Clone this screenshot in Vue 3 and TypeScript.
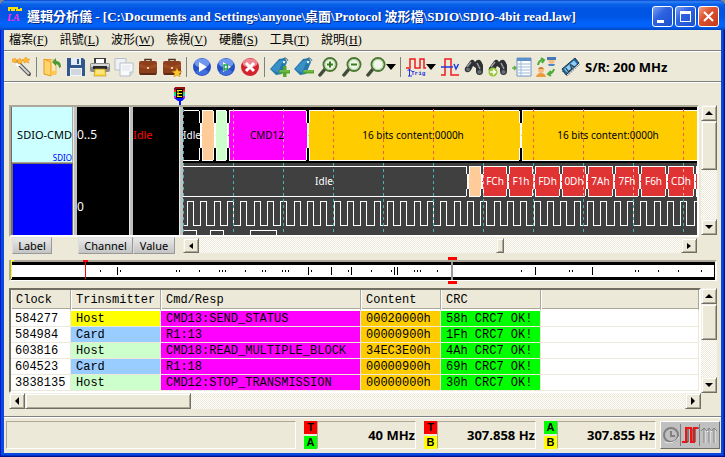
<script setup lang="ts">
interface Segment {
  from: number
  to: number
  kind: 'idle' | 'peach' | 'mint' | 'magenta' | 'amber' | 'red'
}

interface Tool {
  id: string
  label: string
  menu?: boolean
}

const menus = [
  { text: '檔案', key: 'F' },
  { text: '訊號', key: 'L' },
  { text: '波形', key: 'W' },
  { text: '檢視', key: 'V' },
  { text: '硬體', key: 'S' },
  { text: '工具', key: 'T' },
  { text: '說明', key: 'H' },
]

const toolGroups: Tool[][] = [
  [{ id: 'wand', label: 'Wizard' }],
  [
    { id: 'open', label: 'Open' },
    { id: 'save', label: 'Save' },
    { id: 'print', label: 'Print' },
    { id: 'copy', label: 'Copy' },
    { id: 'case', label: 'Settings' },
    { id: 'casestar', label: 'Default settings' },
  ],
  [
    { id: 'play', label: 'Run' },
    { id: 'repeat', label: 'Repeat run' },
    { id: 'stop', label: 'Stop' },
  ],
  [
    { id: 'tagadd', label: 'Add label' },
    { id: 'tagdel', label: 'Remove label' },
    { id: 'zoomin', label: 'Zoom in' },
    { id: 'zoomout', label: 'Zoom out' },
    { id: 'zoom', label: 'Zoom', menu: true },
  ],
  [
    { id: 'trig', label: 'Trigger', menu: true },
    { id: 'volt', label: 'Threshold' },
    { id: 'find', label: 'Find' },
    { id: 'findnext', label: 'Find next' },
    { id: 'list', label: 'Report' },
    { id: 'users', label: 'Swap' },
    { id: 'chip', label: 'Analyzer' },
  ],
]

/* Bus segments, in pixels from the left edge of the plot */
const commandLane: Segment[] = [
  { from: -4, to: 18, kind: 'idle' },
  { from: 18, to: 32, kind: 'peach' },
  { from: 32, to: 45, kind: 'mint' },
  { from: 45, to: 125, kind: 'magenta' },
  { from: 125, to: 338, kind: 'amber' },
  { from: 338, to: 518, kind: 'amber' },
]

const byteEdges = [299, 325, 351, 378, 404, 431, 457, 484, 512]
const bytes = ['FCh', 'F1h', 'FDh', '0Dh', '7Ah', '7Fh', 'F6h', 'CDh']
const dataLane: Segment[] = [
  { from: -3, to: 285, kind: 'idle' },
  { from: 285, to: 299, kind: 'peach' },
  ...bytes.map((_, i): Segment => ({
    from: byteEdges[i],
    to: byteEdges[i + 1],
    kind: 'red',
  })),
  { from: 512, to: 540, kind: 'red' },
]

function hexagon(s: Segment, top: number, bottom: number): string {
  const mid = (top + bottom) / 2
  const inset = 2
  return [
    [s.from, mid],
    [s.from + inset, top],
    [s.to - inset, top],
    [s.to, mid],
    [s.to - inset, bottom],
    [s.from + inset, bottom],
  ].map((p) => p.join(',')).join(' ')
}

function clockPath(): string {
  let d = 'M0 118'
  for (let k = 0; k < 60; k++) {
    const rise = Math.round(4 + (k * 40) / 3)
    d += `H${rise}V94H${rise + 6}V118`
  }
  return d
}

const clock = clockPath()
const gridLines = Array.from({ length: 24 }, (_, i) => i * 50)

/* Overview marks, in pixels from the left end of the strip */
const dots = [
  89, 109, 165, 168, 188, 208, 211, 214, 234, 251, 254, 271, 274, 277, 300, 337,
  360, 380, 403, 406, 409, 426, 510, 558, 561, 624, 627, 647, 667, 690,
]
const bars = [106, 297, 320, 340, 383, 386, 524, 581]

const rows = [
  { clock: '584277', who: 'Host', tone: 'yellow', cmd: 'CMD13:SEND_STATUS', content: '00020000h', crc: '58h CRC7 OK!' },
  { clock: '584984', who: 'Card', tone: 'blue', cmd: 'R1:13', content: '00000900h', crc: '1Fh CRC7 OK!' },
  { clock: '603816', who: 'Host', tone: 'mint', cmd: 'CMD18:READ_MULTIPLE_BLOCK', content: '34EC3E00h', crc: '4Ah CRC7 OK!' },
  { clock: '604523', who: 'Card', tone: 'blue', cmd: 'R1:18', content: '00000900h', crc: '69h CRC7 OK!' },
  { clock: '3838135', who: 'Host', tone: 'mint', cmd: 'CMD12:STOP_TRANSMISSION', content: '00000000h', crc: '30h CRC7 OK!' },
]

const meters = [
  { a: 'T', b: 'A', value: '40 MHz' },
  { a: 'T', b: 'B', value: '307.858 Hz' },
  { a: 'A', b: 'B', value: '307.855 Hz' },
]
</script>

<template>
  <div class="window">
    <header class="titlebar">
      <svg class="app-icon" width="16" height="18" viewBox="0 0 16 18">
        <path d="M2 5V2H5V4H7V2H10V4H14V2" fill="none" stroke="#ffe000" stroke-width="2" />
        <text x="0" y="15" class="app-icon-text">LA</text>
      </svg>
      <h1>邏輯分析儀 - [C:\Documents and Settings\anyone\桌面\Protocol 波形檔\SDIO\SDIO-4bit read.law]</h1>
      <div class="caption-buttons">
        <button type="button" class="cap" aria-label="Minimize">
          <svg width="19" height="19" viewBox="0 0 19 19"><path d="M4 13H11V16H4Z" fill="#fff" /></svg>
        </button>
        <button type="button" class="cap" aria-label="Maximize">
          <svg width="19" height="19" viewBox="0 0 19 19"><path d="M4 4H15V15H4ZM5 7V14H14V7Z" fill="#fff" fill-rule="evenodd" /></svg>
        </button>
        <button type="button" class="cap close" aria-label="Close">
          <svg width="19" height="19" viewBox="0 0 19 19"><path d="M5 5L14 14M14 5L5 14" stroke="#fff" stroke-width="2" /></svg>
        </button>
      </div>
    </header>

    <div class="content">
      <nav class="menubar">
        <button v-for="m in menus" :key="m.key" type="button">{{ m.text }}(<u>{{ m.key }}</u>)</button>
      </nav>

      <div class="toolbar">
        <div v-for="(group, gi) in toolGroups" :key="gi" class="tool-group">
          <button v-for="t in group" :key="t.id" type="button" class="tool" :aria-label="t.label">
            <svg width="20" height="20" viewBox="0 0 20 20">
              <g v-if="t.id === 'wand'">
                <path d="M6 6L17 17" stroke="#555" stroke-width="4" stroke-linecap="round" />
                <path d="M6 6L17 17" stroke="#d3d5d8" stroke-width="2" />
                <path d="M4 6L7 9" stroke="#fff" stroke-width="3" />
                <path d="M8 1l1 2 2 0-1.500 2 .5 2-2-1-2 1 0-2-2-2 2 0zM14 0l1 2 3 0-2 2 1 2-3-1-2 1 0-2-2-1 2-1zM3 1l1 2 2 0-2 1 0 2-2-1-2 0 1-2-1-1 2 0z" fill="#ffb930" stroke="#e88a10" stroke-width=".5" />
              </g>
              <g v-else-if="t.id === 'open'">
                <path d="M2 2H9L11 4H13V17L2 18Z" fill="#f2a51c" />
                <path d="M5 3H14V17H5Z" fill="#fbe9b8" stroke="#e9a83a" stroke-width=".8" />
                <path d="M2 2L9 5V19L2 17Z" fill="#ffd569" stroke="#e99a16" />
                <path d="M12 11C12 8 14 7 15 7V9L19 5L15 1V4C12 4 10 6 10 10Z" fill="#4c9a35" transform="matrix(-1 0 0 1 29 0)" />
                <path d="M9 14H14V18H9Z" fill="#ffc84c" />
              </g>
              <g v-else-if="t.id === 'save'">
                <path d="M1 1H17L19 3V19H1Z" fill="#31588e" />
                <path d="M5 1H15V8H5Z" fill="#e4edf7" />
                <path d="M11 2H13V7H11Z" fill="#31588e" />
                <path d="M4 11H16V19H4Z" fill="#f4f7fa" />
                <path d="M5 13H15M5 15H15M5 17H15" stroke="#aab7c8" />
              </g>
              <g v-else-if="t.id === 'print'">
                <path d="M4 1H16V7H4Z" fill="#3d3d3d" />
                <path d="M6 2H14V6H6Z" fill="#fff" />
                <rect x="0" y="6" width="20" height="9" rx="2" fill="#8a8a8a" />
                <path d="M1 7H19V10H1Z" fill="#d6d6d6" />
                <path d="M3 9H17V12H3Z" fill="#292929" />
                <path d="M5 12H15L16 19H4Z" fill="#ffd83c" stroke="#b89b33" stroke-width=".7" />
                <path d="M6 14H14M6 16H14" stroke="#f6efc0" />
              </g>
              <g v-else-if="t.id === 'copy'" stroke="#b9bfc8">
                <path d="M1 1.500H12V13H1Z" fill="#eef1f5" />
                <path d="M6 6H19V15L16 19H6Z" fill="#f9fafc" />
                <path d="M19 15H16V19" fill="#d5dbe3" />
                <path d="M8 9H17M8 11H16M8 13H16" stroke="#dde2e8" />
              </g>
              <g v-else-if="t.id === 'case' || t.id === 'casestar'">
                <path d="M7 5V2.500H13V5" fill="none" stroke="#51301f" stroke-width="1.500" />
                <rect x="1" y="4" width="18" height="14" rx="2" fill="#8d3f1c" />
                <path d="M1 6Q10 12 19 6V10Q10 14 1 10Z" fill="#a04a24" />
                <path d="M2 17H18" stroke="#5e2a13" stroke-width="2" />
                <path d="M9 10H11V12H9Z" fill="#eccf91" />
                <path v-if="t.id === 'casestar'" d="M15 11L16.300 14 20 14.500 17.300 16.500 18 20 15 18.200 12 20 12.700 16.500 10 14.500 13.700 14Z" fill="#ffc62e" stroke="#d98b16" stroke-width=".5" />
              </g>
              <g v-else-if="t.id === 'play' || t.id === 'repeat'">
                <circle cx="10" cy="10" r="9" fill="#274fc4" />
                <ellipse cx="10" cy="6" rx="7.500" ry="4.500" fill="#6f97ee" />
                <ellipse cx="10" cy="15" rx="6" ry="3" fill="#5686ef" opacity=".6" />
                <path d="M7 5L15 10L7 15Z" fill="#fff" />
                <path v-if="t.id === 'repeat'" d="M8 14V8H11.500V12H8" fill="none" stroke="#16a34a" stroke-width="1.500" />
              </g>
              <g v-else-if="t.id === 'stop'">
                <circle cx="10" cy="10" r="9" fill="#d3232f" />
                <ellipse cx="10" cy="6" rx="7.500" ry="4.500" fill="#ee8890" />
                <path d="M6 6L14 14M14 6L6 14" stroke="#fff" stroke-width="3" />
              </g>
              <g v-else-if="t.id === 'tagadd' || t.id === 'tagdel'">
                <path d="M0 12L9 2L15 1L17 5L12 17L6 18Z" fill="#2377ad" />
                <path d="M1 12L9 4L13 3L8 16Z" fill="#3a90c6" />
                <circle cx="14" cy="5" r="1.300" fill="#e3eff5" />
                <path d="M13 2Q16-1 18 4" fill="none" stroke="#426a80" />
                <path d="M9 13H20V16.500H9Z" fill="#54a52e" />
                <path v-if="t.id === 'tagadd'" d="M13 9H16.500V20H13Z" fill="#54a52e" />
                <path d="M10 14H19" stroke="#89cb5c" />
              </g>
              <g v-else-if="t.id === 'zoomin' || t.id === 'zoomout' || t.id === 'zoom'">
                <path d="M7 12L2 18" stroke="#424c3d" stroke-width="3.500" stroke-linecap="round" />
                <circle cx="12" cy="7.500" r="6.500" fill="#eef7e8" stroke="#4d7834" stroke-width="2" />
                <circle cx="12" cy="7.500" r="5" fill="none" stroke="#b8d2a5" />
                <path v-if="t.id !== 'zoom'" d="M9 7.500H15" stroke="#387c1f" stroke-width="2" />
                <path v-if="t.id === 'zoomin'" d="M12 4.500V10.500" stroke="#387c1f" stroke-width="2" />
              </g>
              <g v-else-if="t.id === 'trig'">
                <path d="M0 11H4V2H9V11H14V2H18V11H20" fill="none" stroke="#f01d1d" stroke-width="1.500" />
                <path d="M3.500 12V19M1.500 14L3.500 12L5.500 14M2 19H6" fill="none" stroke="#1b32db" />
                <text x="5" y="18" class="trig-text">Trig</text>
              </g>
              <g v-else-if="t.id === 'volt'">
                <path d="M1 18H5V2H11V18H19" fill="none" stroke="#f01d1d" stroke-width="1.500" />
                <path d="M1 10H13M14 7L16 12L18.500 7" fill="none" stroke="#2539dd" stroke-width="1.500" />
              </g>
              <g v-else-if="t.id === 'find' || t.id === 'findnext'">
                <path d="M1 11L6 4Q9 1 11 5Q14 1 17 4L19 8V14Q19 18 15.500 18Q12 18 12 14V11L9 9L7 13Q5 16 2.500 15Q0 14 1 11Z" fill="#2f3133" />
                <path d="M3 10L7 5M13 6L16 12" stroke="#979da2" stroke-width="1.500" />
                <ellipse cx="4" cy="12.500" rx="2" ry="1.800" fill="#66707a" />
                <ellipse cx="15.500" cy="15" rx="2.200" ry="2" fill="#66707a" />
                <g v-if="t.id === 'findnext'">
                  <circle cx="5" cy="15" r="4.500" fill="#98c83c" />
                  <path d="M2 15H7M5 12.500L7.500 15L5 17.500" fill="none" stroke="#fff" stroke-width="1.500" />
                </g>
              </g>
              <g v-else-if="t.id === 'list'">
                <path d="M5 1H19V19H5Z" fill="#fff" stroke="#7092bd" />
                <path d="M5 1H19V4H5Z" fill="#5d8fc9" />
                <path d="M6 7H18M6 10H18M6 13H18M6 16H18" stroke="#9bb9db" />
                <path d="M9 4V19" stroke="#9bb9db" />
                <path d="M0 11H4M2 9L4 11L2 13" fill="none" stroke="#5fae4c" stroke-width="1.500" />
              </g>
              <g v-else-if="t.id === 'users'">
                <circle cx="15.500" cy="4" r="3" fill="#f4bd8e" />
                <path d="M11 0H20V3H11Z" fill="#4479b5" />
                <path d="M12 7H19L18 9H13Z" fill="#4d86c4" />
                <circle cx="5" cy="13" r="3" fill="#f6ba83" />
                <path d="M2 12Q5 8 8 12Z" fill="#cc7a2a" />
                <path d="M0 20Q1 16 5 16T10 20Z" fill="#ee9b3b" />
                <path d="M2 8Q3 3 7 3M5 1L8 3L6 6M18 12Q17 16 13 17M15 14L12 17L15 19" fill="none" stroke="#4fab3c" stroke-width="2" />
              </g>
              <g v-else>
                <path d="M2 12L15 1L19 6L6 18Z" fill="#1f68a8" stroke="#273544" />
                <path d="M4 12L14 3.500L17 7L7 15.500Z" fill="#8fd0f2" />
                <path d="M2 14L7 19L20 7" fill="none" stroke="#6d7882" stroke-dasharray="2 1" />
                <text x="5" y="13" class="chip-text" transform="rotate(-40 10 10)">LA</text>
              </g>
            </svg>
            <span v-if="t.menu" class="drop"></span>
          </button>
        </div>
        <output class="rate">S/R: 200 MHz</output>
      </div>

      <main class="client">
        <section class="wave-area">
          <div class="wave-main">
            <svg class="cursor" width="12" height="19" viewBox="0 0 12 19">
              <path d="M0 1H11V11L8 14H7V18H5V14H4L0 11Z" fill="#0013ff" />
              <path d="M1 0H11V3H0Z" fill="#9b0e0e" />
              <path d="M0 3H11V5H0Z" fill="#ff3131" />
              <path d="M0 5H11V7H0Z" fill="#19d94a" />
              <path d="M0 7H11V9H0Z" fill="#00d6d6" />
              <path d="M0 9H11V11H0Z" fill="#d71dde" />
              <path d="M2 2H9V11H2Z" fill="#000" />
              <path d="M3 3.500H8M3 6.500H8M3 9.500H8M4 3V10" fill="none" stroke="#fff200" />
            </svg>
            <div class="wave-panel">
              <div class="label-col">
                <div class="label-cell"><span>SDIO-CMD</span><small>SDIO</small></div>
                <div class="label-blue"></div>
              </div>
              <div class="splitter"></div>
              <div class="black-col channel">
                <span class="first">0..5</span>
                <span class="second">0</span>
              </div>
              <div class="splitter"></div>
              <div class="black-col value"><span class="first red-text">Idle</span></div>
              <div class="splitter"></div>
              <div class="plot">
                <svg width="100%" height="128" shape-rendering="crispEdges">
                  <rect width="100%" height="56" fill="#000" />
                  <rect y="56" width="100%" height="72" fill="#404040" />
                  <g stroke="#fff">
                    <polygon v-for="(s, i) in commandLane" :key="i" :points="hexagon(s, 3.5, 53.5)" :class="s.kind" />
                    <polygon v-for="(s, i) in dataLane" :key="i" :points="hexagon(s, 59.5, 89.5)" :class="[s.kind, 'grey-idle']" />
                    <path :d="clock" fill="none" />
                    <path d="M0 123H13V140H27V123H40V140H67V123H93V140" fill="none" />
                  </g>
                  <g stroke-dasharray="3 3">
                    <g v-for="x in gridLines" :key="x">
                      <path :d="`M${x + 0.5} 2V56`" :stroke="x < 45 ? '#38a8a8' : x < 125 ? '#f7a0b0' : '#f25a4b'" />
                      <path :d="`M${x + 0.5} 56V126`" stroke="#45b5b0" />
                      <path v-if="x > 299" :d="`M${x + 0.5} 62V88`" stroke="#f7a8a8" />
                    </g>
                  </g>
                  <g class="wave-text" text-anchor="middle">
                    <text x="9" y="32" fill="#fff">Idle</text>
                    <text x="84" y="32">CMD12</text>
                    <text x="230" y="32">16 bits content:0000h</text>
                    <text x="425" y="32">16 bits content:0000h</text>
                    <text x="141" y="78" fill="#fff">Idle</text>
                    <text v-for="(b, i) in bytes" :key="b" :x="(byteEdges[i] + byteEdges[i + 1]) / 2" y="78" fill="#fff">{{ b }}</text>
                  </g>
                </svg>
              </div>
            </div>
            <div class="wave-footer">
              <div class="col-buttons">
                <button type="button" class="col-btn label-btn">Label</button>
                <button type="button" class="col-btn channel-btn">Channel</button>
                <button type="button" class="col-btn value-btn">Value</button>
              </div>
              <div class="scroll h wave-scroll">
                <button type="button" class="arrow" aria-label="Scroll left"><i class="left"></i></button>
                <span class="gap-before"></span><span class="thumb"></span><span class="gap-after"></span>
                <button type="button" class="arrow" aria-label="Scroll right"><i class="right"></i></button>
              </div>
            </div>
          </div>
          <div class="scroll v wave-vscroll">
            <button type="button" class="arrow" aria-label="Scroll up"><i class="up"></i></button>
            <span class="thumb"></span><span class="fill"></span>
            <button type="button" class="arrow" aria-label="Scroll down"><i class="down"></i></button>
          </div>
        </section>

        <section class="overview">
          <svg width="100%" height="27" shape-rendering="crispEdges">
            <rect y="5" width="100%" height="18" fill="#000" />
            <rect x="1" y="8" width="100%" height="12" fill="#fff" />
            <rect x="100%" y="5" width="1" height="18" transform="translate(-1)" />
            <rect v-for="x in dots" :key="x" :x="x" y="13" width="1" height="2" />
            <rect v-for="x in bars" :key="x" :x="x" y="10" width="1" height="8" />
            <path d="M0 3H3V4H1V22H0Z" fill="#ff0" />
            <path d="M72 3H77V5H75V22H74V5H72Z" fill="#f00" />
            <rect x="440" y="5" width="2" height="18" fill="#999" />
            <path d="M437 0H446V3H437ZM437 24H446V27H437Z" fill="#f00" />
          </svg>
        </section>

        <section class="report">
          <div class="report-top">
            <div class="table-box">
              <table>
                <colgroup>
                  <col class="c-clock" /><col class="c-who" /><col class="c-cmd" /><col class="c-content" /><col class="c-crc" /><col />
                </colgroup>
                <thead>
                  <tr><th>Clock</th><th>Trinsmitter</th><th>Cmd/Resp</th><th>Content</th><th>CRC</th><th></th></tr>
                </thead>
                <tbody>
                  <tr v-for="r in rows" :key="r.clock">
                    <td class="num">{{ r.clock }}</td>
                    <td :class="r.tone">{{ r.who }}</td>
                    <td class="magenta">{{ r.cmd }}</td>
                    <td class="amber">{{ r.content }}</td>
                    <td class="green">{{ r.crc }}</td>
                    <td></td>
                  </tr>
                </tbody>
              </table>
            </div>
            <div class="scroll v">
              <button type="button" class="arrow" aria-label="Scroll up"><i class="up"></i></button>
              <span class="thumb short"></span><span class="fill"></span>
              <button type="button" class="arrow" aria-label="Scroll down"><i class="down"></i></button>
            </div>
          </div>
          <div class="scroll h report-scroll">
            <button type="button" class="arrow" aria-label="Scroll left"><i class="left"></i></button>
            <span class="thumb wide"></span><span class="fill"></span>
            <button type="button" class="arrow" aria-label="Scroll right"><i class="right"></i></button>
          </div>
        </section>
      </main>

      <footer class="status">
        <div class="status-pane message"></div>
        <div v-for="m in meters" :key="m.a + m.b" class="meter">
          <div class="pair"><b :class="'m' + m.a">{{ m.a }}</b><b :class="'m' + m.b">{{ m.b }}</b></div>
          <output class="status-pane">{{ m.value }}</output>
        </div>
        <div class="modes">
          <button type="button" aria-label="Timing">
            <svg width="18" height="22" viewBox="0 -1 18 22"><circle cx="9" cy="10" r="7" fill="none" stroke="#808080" stroke-width="2" /><path d="M9 6V11H13" fill="none" stroke="#808080" stroke-width="2" /><path d="M3 17Q12 20 17 12" fill="none" stroke="#eee" /></svg>
          </button>
          <button type="button" aria-label="Waveform">
            <svg width="18" height="22" viewBox="0 -1 18 22"><path d="M3 17H7V3H11V17H14V3H18" fill="none" stroke="#333" stroke-width="1" /><path d="M1 17H5V3H10V17H13V3H17" fill="none" stroke="#f01515" stroke-width="2" /></svg>
          </button>
          <button type="button" aria-label="State">
            <svg width="18" height="22" viewBox="0 -1 18 22" fill="none"><path d="M5 18V4M10 18V4M15 18V4M4 7L6 5L8 7L10 5L12 7" stroke="#f4f4f4" /><path d="M4 18V3M9 18V3M14 18V3M1 6L4 3L6.500 6L9 3L11.500 6L14 3L17 6" stroke="#808080" /></svg>
          </button>
        </div>
      </footer>
    </div>
  </div>
</template>

<style>
body {
  margin: 0;
  background: #7f8893;
}
</style>

<style scoped>
* {
  box-sizing: border-box;
}
button {
  font: inherit;
  color: inherit;
  padding: 0;
  margin: 0;
  border: 0;
  background: none;
}
svg {
  display: block;
}
.window {
  min-height: 100vh;
  display: flex;
  flex-direction: column;
  padding: 0 4px 4px;
  background: #0a48e2;
  border-radius: 7px 7px 0 0;
  box-shadow: inset 1px 0 #0018c8, inset -1px -1px #00138c, inset -2px -2px #0530c4;
  overflow: hidden;
  font-family: "Noto Sans", "Noto Sans CJK TC", sans-serif;
  font-size: 11px;
  color: #000;
}
.titlebar {
  height: 30px;
  margin: 0 -4px;
  padding: 0 6px 0 7px;
  display: flex;
  align-items: center;
  gap: 4px;
  background: linear-gradient(#0842c8 0, #2f83f7 6%, #0d63ea 13%, #0054e3 28%, #0055e5 55%, #0263fb 78%, #0161f8 88%, #0046c0 100%);
}
.app-icon-text {
  font: italic bold 10px "Liberation Serif", serif;
  fill: #ff2fe0;
}
h1 {
  flex: 1;
  min-width: 0;
  margin: 0;
  padding-top: 4px;
  overflow: hidden;
  white-space: nowrap;
  font: bold 13px/20px "Liberation Serif", "Noto Sans CJK TC", serif;
  color: #fff;
  text-shadow: 1px 1px #0a2a80;
}
.caption-buttons {
  display: flex;
  gap: 2px;
  padding-top: 3px;
}
.cap {
  width: 21px;
  height: 21px;
  border: 1px solid #fff;
  border-radius: 3px;
  background: linear-gradient(135deg, #7ea2f2, #2d62e2 40%, #1d50cf);
}
.cap.close {
  background: linear-gradient(135deg, #f0a085, #dd5130 40%, #c2391a);
}
.content {
  flex: 1;
  display: flex;
  flex-direction: column;
  background: #ece9d8;
}
.menubar {
  height: 22px;
  padding: 0 5px;
  display: flex;
  gap: 12px;
  border-bottom: 1px solid #fff;
  box-shadow: inset 0 -1px #808080;
  font: 12px/20px "Liberation Serif", "Noto Sans CJK TC", serif;
}
.menubar button {
  white-space: nowrap;
  height: 20px;
}
.toolbar {
  height: 31px;
  padding: 0 6px;
  display: flex;
  align-items: center;
  border-bottom: 1px solid #fff;
  box-shadow: inset 0 -1px #808080;
}
.tool-group {
  display: flex;
}
.tool-group + .tool-group {
  margin-left: 2px;
  padding-left: 3px;
  border-left: 1px solid #808080;
}
.tool {
  height: 20px;
  padding: 0 2px;
  display: flex;
  align-items: center;
}
.drop {
  width: 0;
  height: 0;
  border: 5px solid transparent;
  border-top: 6px solid #000;
  border-bottom: 0;
}
.trig-text {
  font: bold 6px "Liberation Mono", monospace;
  fill: #1b32db;
}
.chip-text {
  font: bold 7px "Liberation Sans", sans-serif;
  fill: #12304a;
}
.rate {
  margin-left: 3px;
  white-space: nowrap;
  font-size: 13px;
  font-weight: bold;
}
.client {
  flex: 1;
  padding: 22px 4px 0 5px;
}
.wave-area {
  display: flex;
  align-items: flex-start;
  gap: 2px;
}
.wave-main {
  position: relative;
  flex: 1;
  min-width: 0;
}
.cursor {
  position: absolute;
  left: 165px;
  top: -18px;
}
.wave-panel {
  display: flex;
  height: 132px;
  border: 2px solid;
  border-color: #aca899 #fff #fff #aca899;
  background: #000;
  font-size: 12px;
  line-height: 14px;
}
.label-col {
  width: 62px;
  display: flex;
  flex-direction: column;
  background: #716f64;
}
.label-cell {
  height: 56px;
  margin-left: 1px;
  padding-top: 21px;
  display: flex;
  flex-direction: column;
  align-items: flex-end;
  justify-content: space-between;
  background: #ccffff;
  border-right: 1px solid #aca899;
  border-bottom: 1px solid #aca899;
  font-size: 11px;
}
.label-cell small {
  font-size: 8px;
  line-height: 9px;
  color: #0000ff;
}
.label-blue {
  flex: 1;
  margin: 1px 1px 0 2px;
  background: #0000ff;
}
.splitter {
  width: 4px;
  background: #c0c0c0;
  border-left: 1px solid #e8e8e8;
}
.black-col {
  display: flex;
  flex-direction: column;
  overflow: hidden;
  color: #fff;
}
.channel {
  width: 52px;
}
.value {
  width: 46px;
}
.first {
  margin-top: 21px;
}
.second {
  margin-top: 58px;
}
.red-text {
  color: #f00;
  font-size: 11px;
}
.plot {
  flex: 1;
  min-width: 0;
  overflow: hidden;
}
.idle {
  fill: #000;
}
.grey-idle.idle {
  fill: #404040;
}
polygon.peach {
  fill: #ffcc99;
}
polygon.mint {
  fill: #ccffcc;
}
polygon.magenta {
  fill: #ff00ff;
}
polygon.amber {
  fill: #ffcc00;
}
polygon.red {
  fill: #e03333;
}
.wave-text {
  font-size: 10px;
}
.wave-footer {
  display: flex;
}
.col-buttons {
  width: 174px;
  padding-left: 3px;
  display: flex;
}
.col-btn {
  height: 17px;
  border: 1px solid;
  border-color: #ddd #999 #999 #ddd;
  background: linear-gradient(#e8e8e8, #c4c4c4);
  font-size: 11px;
  line-height: 14px;
}
.label-btn {
  width: 40px;
  margin-right: 26px;
}
.channel-btn {
  width: 55px;
}
.value-btn {
  width: 42px;
}
.scroll {
  display: flex;
  background: repeating-conic-gradient(#fff 0 25%, #ece9d8 0 50%) 0 0 / 2px 2px;
}
.scroll.v {
  flex-direction: column;
  width: 16px;
}
.arrow,
.thumb {
  flex: none;
  border: 1px solid;
  border-color: #f1efe2 #716f64 #716f64 #f1efe2;
  box-shadow: inset 1px 1px #fff, inset -1px -1px #aca899;
  background: #ece9d8;
}
.arrow {
  width: 16px;
  height: 16px;
  display: flex;
  align-items: center;
  justify-content: center;
}
.arrow i {
  border: 4px solid transparent;
}
.arrow .left {
  border-right-color: #000;
  border-left: 0;
}
.arrow .right {
  border-left-color: #000;
  border-right: 0;
}
.arrow .up {
  border-bottom-color: #000;
  border-top: 0;
}
.arrow .down {
  border-top-color: #000;
  border-bottom: 0;
}
.fill {
  flex: 1;
}
.wave-scroll {
  flex: 1;
  height: 15px;
  margin: 1px 2px 0 0;
}
.wave-scroll .arrow {
  height: 15px;
}
.wave-scroll .arrow i {
  border-top-width: 3px;
  border-bottom-width: 3px;
}
.wave-scroll .thumb {
  width: 8px;
}
.gap-before {
  flex: 297;
}
.gap-after {
  flex: 177;
}
.wave-vscroll {
  height: 130px;
}
.v .thumb {
  height: 49px;
}
.v .thumb.short {
  height: 36px;
}
.overview {
  margin-top: 3px;
  position: relative;
  padding: 0 2px;
}
.overview::before {
  content: "";
  position: absolute;
  inset: 3px 0 3px 0;
  border: 2px solid;
  border-color: #aca899 #fff #fff #aca899;
}
.overview svg {
  position: relative;
}
.report {
  margin-top: 4px;
}
.report-top {
  display: flex;
}
.table-box {
  flex: 1;
  min-width: 0;
  height: 105px;
  border: 2px solid;
  border-color: #716f64 #fff #fff #716f64;
  background: #fff;
  overflow: hidden;
}
table {
  width: 100%;
  table-layout: fixed;
  border-collapse: separate;
  border-spacing: 0;
  font: 12px/14px "Liberation Mono", monospace;
}
.c-clock {
  width: 60px;
}
.c-who {
  width: 90px;
}
.c-cmd {
  width: 200px;
}
.c-content {
  width: 80px;
}
.c-crc {
  width: 100px;
}
th {
  height: 21px;
  padding: 2px 5px 1px;
  text-align: left;
  font-weight: normal;
  white-space: nowrap;
  background: #ece9d8;
  border-right: 1px solid #aca899;
  border-bottom: 2px solid #fff;
  box-shadow: inset 1px 0 #fff, inset 0 -1px #aca899;
}
td {
  height: 16px;
  padding: 1px 5px 0;
  white-space: nowrap;
  border-right: 1px solid #ece9d8;
  border-bottom: 1px solid #ece9d8;
}
td.num {
  padding-left: 4px;
}
td.yellow {
  background: #ffff00;
}
td.blue {
  background: #99ccff;
}
td.mint {
  background: #ccffcc;
}
td.magenta {
  background: #ff00ff;
}
td.amber {
  background: #ffcc00;
}
td.green {
  background: #00ff00;
}
.report-scroll {
  margin-right: 16px;
}
.wide {
  width: 166px;
}
.status {
  margin-top: 6px;
  padding: 4px 1px 4px 2px;
  display: flex;
  align-items: center;
  gap: 8px;
  border-top: 1px solid #808080;
  box-shadow: inset 0 1px #fff;
}
.status-pane {
  display: block;
  height: 28px;
  border: 1px solid;
  border-color: #aca899 #fff #fff #aca899;
}
.message {
  flex: 1;
}
.meter {
  width: 112px;
  display: flex;
}
.meter .status-pane {
  flex: 1;
  text-align: right;
  font-size: 13px;
  line-height: 26px;
  font-weight: bold;
  white-space: nowrap;
}
.pair {
  width: 13px;
  display: flex;
  flex-direction: column;
  gap: 2px;
}
.pair b {
  height: 13px;
  text-align: center;
  font: bold 11px/13px "Liberation Sans", sans-serif;
}
.mT {
  background: #f00;
}
.mA {
  background: #0f0;
}
.mB {
  background: #ff0;
}
.modes {
  display: flex;
  margin-left: -4px;
  padding: 2px 1px;
  border: 1px solid;
  border-color: #fff #716f64 #716f64 #fff;
  background: #c0c0c0;
}
.modes button + button {
  border-left: 1px solid #808080;
}
</style>
